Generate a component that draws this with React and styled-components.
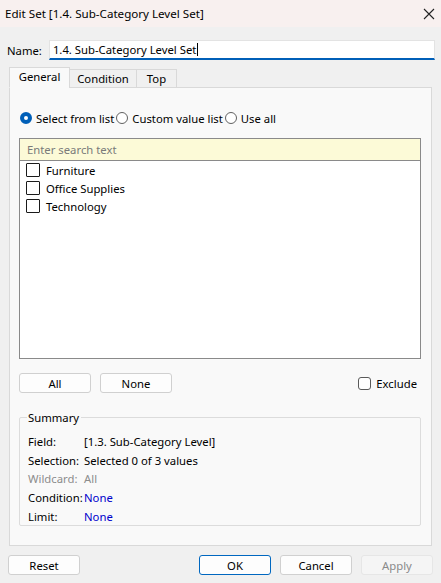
import React from 'react'
import styled, { createGlobalStyle } from 'styled-components'

const Global = createGlobalStyle`
  html, body {
    margin: 0;
    padding: 0;
    background: #f0f0f0;
  }
  body {
    font-family: "Noto Sans", "Open Sans", sans-serif;
    font-size: 11.3px;
    color: #000;
  }
`

const Window = styled.div`
  width: 441px;
  height: 583px;
  background: #f0f0f0;
  display: flex;
  flex-direction: column;
  overflow: hidden;
`

const TitleBar = styled.div`
  height: 27px;
  background: #f8f0ef;
  display: flex;
  align-items: center;
  justify-content: space-between;
  padding: 0 6px 0 5px;
  font-size: 11.6px;
`

const NameRow = styled.div`
  display: flex;
  align-items: center;
  padding: 13px 6px 0 7px;
  gap: 7px;
`

const NameInput = styled.div`
  flex: 1;
  height: 17px;
  background: #fff;
  border: 1px solid #e3e3e3;
  border-bottom: 2px solid #005fb8;
  display: flex;
  align-items: center;
  padding-left: 3px;
`

const Caret = styled.span`
  display: inline-block;
  width: 1px;
  height: 13px;
  background: #000;
  margin-left: 1px;
`

const TabStrip = styled.div`
  display: flex;
  align-items: flex-end;
  margin: 7px 0 0 9px;
  height: 21px;
  position: relative;
  z-index: 1;
`

const Tab = styled.div`
  height: ${p => (p.$active ? '21px' : '19px')};
  width: ${p => p.$w}px;
  display: flex;
  align-items: center;
  justify-content: center;
  background: ${p => (p.$active ? '#f9f9f9' : '#f0f0f0')};
  border: 1px solid #d9d9d9;
  border-bottom: ${p => (p.$active ? '1px solid #f9f9f9' : '1px solid #d9d9d9')};
  margin-left: ${p => (p.$active ? '0' : '-1px')};
  box-sizing: border-box;
  padding-bottom: ${p => (p.$active ? '3px' : '0')};
`

const Panel = styled.div`
  margin: -1px 9px 0 9px;
  height: 459px;
  background: #f9f9f9;
  border: 1px solid #d9d9d9;
  padding: 21px 10px 0 9px;
  box-sizing: border-box;
  display: flex;
  flex-direction: column;
`

const RadioRow = styled.div`
  display: flex;
  align-items: center;
  height: 18px;
`

const RadioItem = styled.label`
  display: flex;
  align-items: center;
  margin-right: 1px;
`

const Radio = styled.span`
  width: 12px;
  height: 12px;
  border-radius: 50%;
  box-sizing: border-box;
  margin: 0 4px 0 1px;
  border: ${p => (p.$on ? '4px solid #005fb8' : '1px solid #616161')};
  background: #fff;
`

const ListBox = styled.div`
  margin-top: 11px;
  height: 221px;
  border: 1px solid #8a8a8a;
  background: #fff;
  box-sizing: border-box;
  display: flex;
  flex-direction: column;
`

const Search = styled.div`
  height: 21px;
  background: #fcfad7;
  border-bottom: 1px solid #8a8a8a;
  color: #7a7a7a;
  display: flex;
  align-items: center;
  padding-left: 7px;
`

const Item = styled.div`
  height: 18px;
  display: flex;
  align-items: center;
  padding-left: 6px;
`

const Box = styled.span`
  width: ${p => p.$size || 14}px;
  height: ${p => p.$size || 14}px;
  border: 1px solid ${p => (p.$round ? '#5a5a5a' : '#1a1a1a')};
  border-radius: ${p => (p.$round ? '3px' : '1px')};
  box-sizing: border-box;
  margin-right: ${p => p.$gap}px;
  background: #fff;
`

const ButtonRow = styled.div`
  display: flex;
  align-items: center;
  margin-top: 14px;
  height: 20px;
`

const Button = styled.div`
  width: ${p => p.$w || 72}px;
  height: 20px;
  box-sizing: border-box;
  border: 1px solid ${p => (p.$disabled ? '#e6e6e6' : p.$primary ? '#0067c0' : '#d0d0d0')};
  border-radius: 3px;
  background: ${p => (p.$disabled ? '#f5f5f5' : '#fdfdfd')};
  color: ${p => (p.$disabled ? '#8a8a8a' : '#000')};
  display: flex;
  align-items: center;
  justify-content: center;
  margin-right: ${p => p.$mr || 0}px;
`

const Spacer = styled.div`
  flex: 1;
`

const Exclude = styled.label`
  display: flex;
  align-items: center;
  margin-right: 4px;
`

const Group = styled.fieldset`
  margin: 17px 0 0 0;
  padding: 7px 8px 0 8px;
  height: 116px;
  box-sizing: border-box;
  border: 1px solid #dcdcdc;
  border-radius: 2px;
  min-width: 0;
`

const Legend = styled.legend`
  padding: 0 2px 0 1px;
  margin-left: -1px;
`

const Grid = styled.div`
  display: grid;
  grid-template-columns: 56px 1fr;
  grid-auto-rows: 18.7px;
  align-items: center;
  white-space: nowrap;
`

const Label = styled.span`
  color: ${p => (p.$dim ? '#8c8c8c' : '#000')};
`

const Value = styled.span`
  color: ${p => (p.$dim ? '#8c8c8c' : p.$link ? '#0000cc' : '#000')};
`

const Footer = styled.div`
  display: flex;
  align-items: center;
  padding: 9px 8px 0 8px;
`

const CloseIcon = () => (
  <svg width="12" height="12" viewBox="0 0 12 12">
    <path d="M1 1 L11 11 M11 1 L1 11" stroke="#222" strokeWidth="1.1" fill="none" />
  </svg>
)

const summary = [
  ['Field:', '[1.3. Sub-Category Level]', {}],
  ['Selection:', 'Selected 0 of 3 values', {}],
  ['Wildcard:', 'All', { dim: true }],
  ['Condition:', 'None', { link: true }],
  ['Limit:', 'None', { link: true }],
]

export default function App() {
  return (
    <Window>
      <Global />
      <TitleBar>
        <span>Edit Set [1.4. Sub-Category Level Set]</span>
        <CloseIcon />
      </TitleBar>
      <NameRow>
        <span>Name:</span>
        <NameInput>
          1.4. Sub-Category Level Set<Caret />
        </NameInput>
      </NameRow>
      <TabStrip>
        <Tab $active $w={61}>General</Tab>
        <Tab $w={68}>Condition</Tab>
        <Tab $w={41}>Top</Tab>
      </TabStrip>
      <Panel>
        <RadioRow>
          <RadioItem><Radio $on />Select from list</RadioItem>
          <RadioItem><Radio />Custom value list</RadioItem>
          <RadioItem><Radio />Use all</RadioItem>
        </RadioRow>
        <ListBox>
          <Search>Enter search text</Search>
          <Item><Box $gap={6} />Furniture</Item>
          <Item><Box $gap={6} />Office Supplies</Item>
          <Item><Box $gap={6} />Technology</Item>
        </ListBox>
        <ButtonRow>
          <Button $mr={9}>All</Button>
          <Button>None</Button>
          <Spacer />
          <Exclude><Box $round $size={13} $gap={5} />Exclude</Exclude>
        </ButtonRow>
        <Group>
          <Legend>Summary</Legend>
          <Grid>
            {summary.map(([k, v, o]) => (
              <React.Fragment key={k}>
                <Label $dim={o.dim}>{k}</Label>
                <Value $dim={o.dim} $link={o.link}>{v}</Value>
              </React.Fragment>
            ))}
          </Grid>
        </Group>
      </Panel>
      <Footer>
        <Button>Reset</Button>
        <Spacer />
        <Button $primary $mr={9}>OK</Button>
        <Button $mr={9}>Cancel</Button>
        <Button $disabled>Apply</Button>
      </Footer>
    </Window>
  )
}
